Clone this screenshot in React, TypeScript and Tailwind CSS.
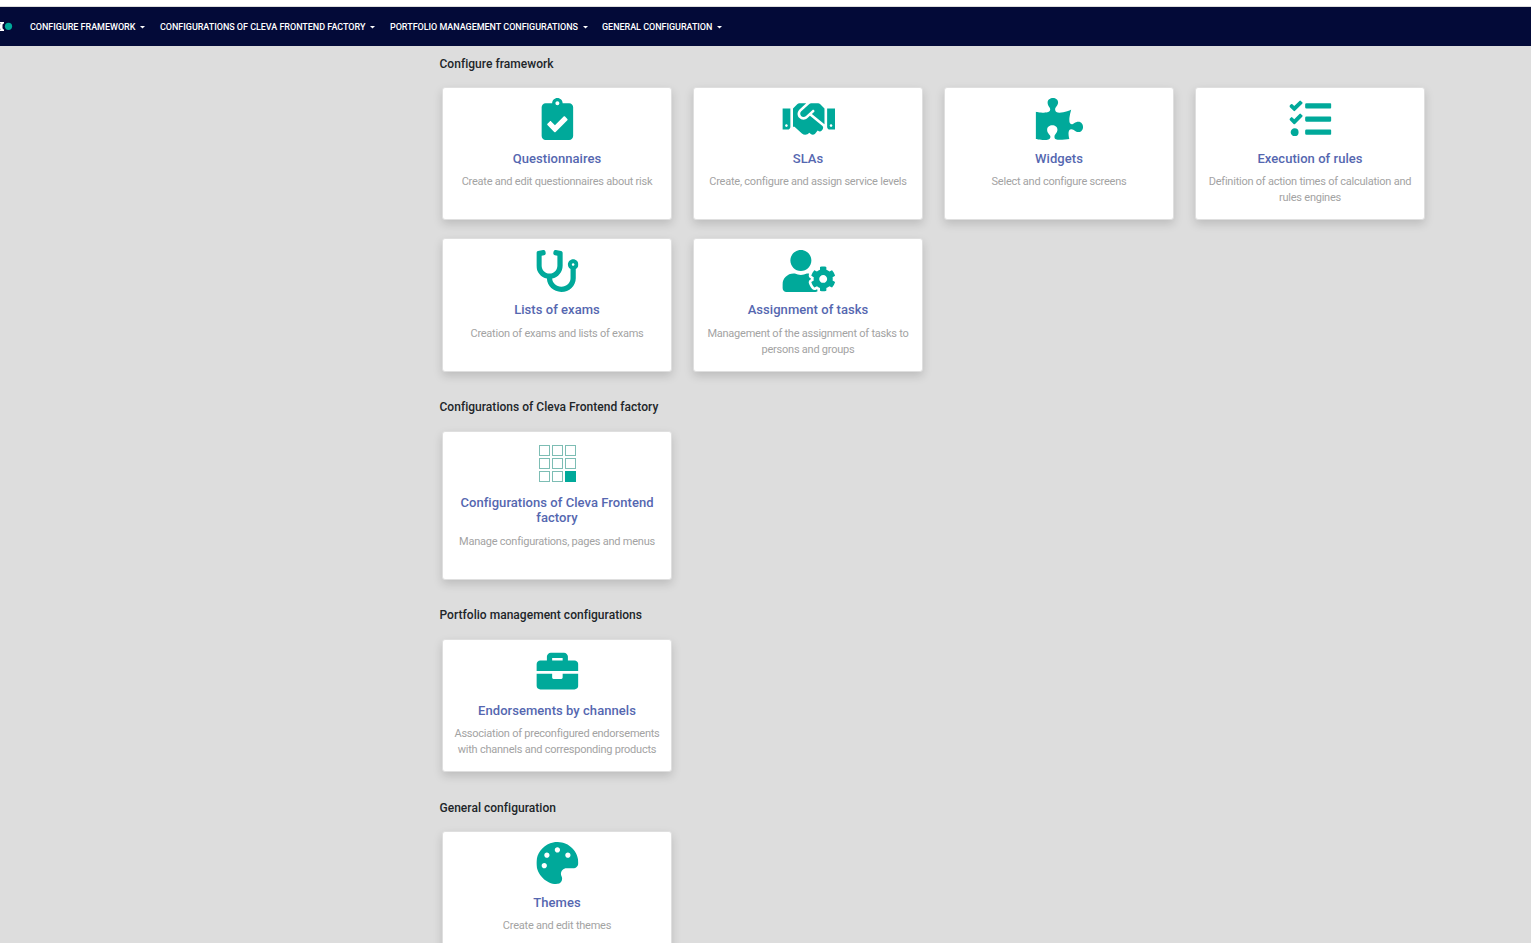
import type { ReactNode } from "react";
import {
  FaBriefcase,
  FaClipboardCheck,
  FaHandshake,
  FaPalette,
  FaPuzzlePiece,
  FaStethoscope,
  FaTasks,
  FaUserCog,
} from "react-icons/fa";

const SQUARE = "h-[42px] w-[42px] shrink-0 translate-x-[0.4px]";
const WIDE = "h-[42px] w-[53px] shrink-0 translate-x-[0.25px]";

function GridIcon() {
  const steps = [0, 13, 26];
  return (
    <svg width="38" height="38" viewBox="0 0 38 38" className="mt-[3px] ml-[2px] shrink-0">
      {steps.map((y) =>
        steps.map((x) => (
          <rect
            key={`${x}-${y}`}
            x={x + 0.5}
            y={y + 0.5}
            width="10"
            height="10"
            fill={x === 26 && y === 26 ? "#00a99a" : "none"}
            stroke={x === 26 && y === 26 ? "#00a99a" : "#7dbdb4"}
          />
        )),
      )}
    </svg>
  );
}

type CardProps = {
  icon: ReactNode;
  title: string;
  text: string;
  className?: string;
  titleGap?: string;
  textGap?: string;
};

function Card({
  icon,
  title,
  text,
  className = "h-[133px] pt-[10px]",
  titleGap = "mt-[11px]",
  textGap = "mt-[8px]",
}: CardProps) {
  return (
    <a
      className={`flex w-[230px] flex-col items-center rounded-[3px] border border-[#dfdfdf] bg-white px-[10px] text-center shadow-[0_4px_10px_rgba(0,0,0,0.15)] ${className}`}
    >
      <span className="flex h-[42px] justify-center text-[#00a99a]">{icon}</span>
      <span className={`${titleGap} text-[13px] leading-[15px] font-medium tracking-[0.05px] text-[#5567b0]`}>
        {title}
      </span>
      <span className={`${textGap} text-[11px] leading-[16px] tracking-[-0.235px] text-[#a3a3a3]`}>{text}</span>
    </a>
  );
}

function Heading({ children }: { children: ReactNode }) {
  return (
    <h2 className="ml-[-2.5px] h-4 text-[12px] leading-4 font-medium tracking-[0.03px] text-[#212529]">{children}</h2>
  );
}

function NavItem({ label, width }: { label: string; width: string }) {
  return (
    <a className={`flex h-[39px] items-start pt-[13px] ${width}`}>
      <span className="leading-[14px] whitespace-nowrap">{label}</span>
      <svg width="5" height="3" viewBox="0 0 5 3" className="mt-[6px] ml-[5px] shrink-0">
        <path d="M0 0h5L2.500 2.500z" fill="#fff" />
      </svg>
    </a>
  );
}

export default function App() {
  return (
    <div className="h-[943px] w-full overflow-hidden bg-[#dddddd] font-['Roboto',sans-serif]">
      <div className="h-[7px] border-b border-[#dddddd] bg-white" />
      <nav className="flex h-[39px] items-center bg-[#030a38] text-[9px] font-medium tracking-[-0.035px] text-white">
        <svg width="30" height="12" viewBox="0 0 30 12" className="mb-px shrink-0">
          <path d="M0 2h4v1.200L2.500 4.500v3.700L4 9.800V11H0V9.600h.8L0 8.500V4.500l.8-1.100H0z" fill="#fff" />
          <circle cx="8.500" cy="6.300" r="3.600" fill="#00a99a" />
        </svg>
        <NavItem label="CONFIGURE FRAMEWORK" width="w-[130px]" />
        <NavItem label="CONFIGURATIONS OF CLEVA FRONTEND FACTORY" width="w-[230px]" />
        <NavItem label="PORTFOLIO MANAGEMENT CONFIGURATIONS" width="w-[212px]" />
        <NavItem label="GENERAL CONFIGURATION" width="w-[130px]" />
      </nav>
      <main className="pl-[442px]">
        <section className="pt-[10px]">
          <Heading>Configure framework</Heading>
          <div className="mt-[15px] flex gap-[21px]">
            <Card
              icon={<FaClipboardCheck className={SQUARE} />}
              title="Questionnaires"
              text="Create and edit questionnaires about risk"
            />
            <Card
              icon={<FaHandshake className={WIDE} />}
              title="SLAs"
              text="Create, configure and assign service levels"
            />
            <Card
              icon={<FaPuzzlePiece className="h-[42px] w-[48px] shrink-0 translate-x-[0.4px]" />}
              title="Widgets"
              text="Select and configure screens"
            />
            <Card
              icon={<FaTasks className={SQUARE} />}
              title="Execution of rules"
              text="Definition of action times of calculation and rules engines"
            />
          </div>
          <div className="mt-[18px] flex gap-[21px]">
            <Card
              icon={<FaStethoscope className={SQUARE} />}
              title="Lists of exams"
              text="Creation of exams and lists of exams"
              className="h-[134px] pt-[11px]"
              titleGap="mt-[10px]"
              textGap="mt-[9px]"
            />
            <Card
              icon={<FaUserCog className={WIDE} />}
              title="Assignment of tasks"
              text="Management of the assignment of tasks to persons and groups"
              className="h-[134px] pt-[11px]"
              titleGap="mt-[10px]"
              textGap="mt-[9px]"
            />
          </div>
        </section>
        <section className="pt-[27px]">
          <Heading>Configurations of Cleva Frontend factory</Heading>
          <div className="mt-4 flex">
            <Card
              icon={<GridIcon />}
              title="Configurations of Cleva Frontend factory"
              text="Manage configurations, pages and menus"
              className="h-[149px] pt-[10px]"
              textGap="mt-[9px]"
            />
          </div>
        </section>
        <section className="pt-[27px]">
          <Heading>Portfolio management configurations</Heading>
          <div className="mt-4 flex">
            <Card
              icon={<FaBriefcase className={SQUARE} />}
              title="Endorsements by channels"
              text="Association of preconfigured endorsements with channels and corresponding products"
            />
          </div>
        </section>
        <section className="pt-[28px]">
          <Heading>General configuration</Heading>
          <div className="mt-[15px] flex">
            <Card icon={<FaPalette className={SQUARE} />} title="Themes" text="Create and edit themes" />
          </div>
        </section>
      </main>
    </div>
  );
}
